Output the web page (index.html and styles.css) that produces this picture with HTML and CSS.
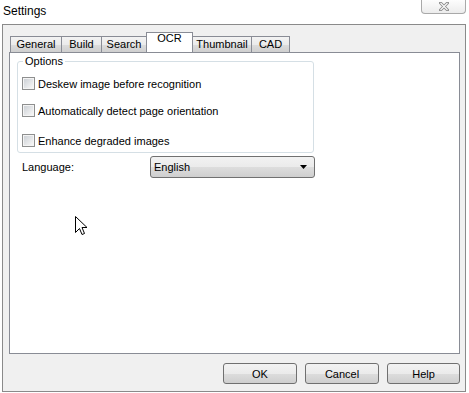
FILE: index.html
```html
<!DOCTYPE html>
<html lang="en">
<head>
  <meta charset="UTF-8">
  <title>Settings</title>
  <link rel="stylesheet" href="styles.css">
</head>
<body>
<div class="window">
  <div class="titlebar">
    <span class="title">Settings</span>
    <button class="close" title="Close">
      <svg width="10" height="9" viewBox="0 0 10 9">
        <path d="M1.5 1 L8.5 8 M8.5 1 L1.5 8" stroke="#8a8a8a" stroke-width="3" stroke-linecap="square" fill="none"/>
        <path d="M1.5 1 L8.5 8 M8.5 1 L1.5 8" stroke="#fafafa" stroke-width="1.2" fill="none"/>
      </svg>
    </button>
  </div>

  <div class="dialog">
    <div class="tabs">
      <div class="tab w-general">General</div>
      <div class="tab w-build">Build</div>
      <div class="tab w-search">Search</div>
      <div class="tab selected w-ocr">OCR</div>
      <div class="tab w-thumb">Thumbnail</div>
      <div class="tab w-cad">CAD</div>
    </div>

    <div class="page">
      <fieldset class="group">
        <legend>Options</legend>
        <label class="check row1"><span class="box"></span>Deskew image before recognition</label>
        <label class="check row2"><span class="box"></span>Automatically detect page orientation</label>
        <label class="check row3"><span class="box"></span>Enhance degraded images</label>
      </fieldset>

      <div class="field">
        <span class="field-label">Language:</span>
        <div class="combo">
          <span>English</span>
          <svg width="7" height="4" viewBox="0 0 7 4"><path d="M0 0 H7 L3.5 4 Z" fill="#000"/></svg>
        </div>
      </div>

      <svg class="cursor" width="13" height="21" viewBox="0 0 13 21">
        <path d="M0.5 0.5 V16.5 L4.5 12.5 L7 18.5 L9.5 17.5 L7 11.5 H12 Z" fill="#fff" stroke="#000" stroke-width="1" stroke-linejoin="miter"/>
      </svg>
    </div>

    <div class="actions">
      <button class="btn">OK</button>
      <button class="btn">Cancel</button>
      <button class="btn btn-last">Help</button>
    </div>
  </div>
</div>
</body>
</html>
```

FILE: styles.css
```css
body {
  margin: 0;
  font-family: 'Liberation Sans', Arial, sans-serif;
  font-size: 11px;
  color: #000;
  background: #fff;
}
.window {
  width: 469px;
  height: 393px;
  background: #fff;
}
.titlebar {
  height: 24px;
  display: flex;
  justify-content: space-between;
  align-items: flex-start;
}
.title {
  font-size: 12px;
  line-height: 14px;
  padding: 4px 0 0 3px;
  color: #000;
}
.close {
  width: 45px;
  height: 14px;
  margin-right: 3px;
  padding: 0 0 1px;
  border: 1px solid #a9a9a9;
  border-top: none;
  border-radius: 0 0 4px 4px;
  background: linear-gradient(#fdfdfd, #ececec);
  display: flex;
  justify-content: center;
  align-items: center;
}
.dialog {
  margin-left: 2px;
  width: 464px;
  height: 368px;
  box-sizing: border-box;
  border: 1px solid #8a8a8a;
  background: #f0f0f0;
  display: flex;
  flex-direction: column;
}
.tabs {
  height: 27px;
  padding-left: 7px;
  display: flex;
  align-items: flex-end;
}
.tab {
  box-sizing: border-box;
  height: 16px;
  margin-left: -1px;
  border: 1px solid #898c95;
  border-bottom: none;
  background: linear-gradient(#f3f3f3 0%, #ebebeb 50%, #dddddd 51%, #cfcfcf 100%);
  text-align: center;
  line-height: 14px;
}
.tab:first-child {
  margin-left: 0;
}
.tab.selected {
  position: relative;
  height: 21px;
  margin-bottom: -1px;
  background: #fff;
  line-height: 11px;
}
.w-general { width: 52px; }
.w-build { width: 41px; }
.w-search { width: 46px; }
.w-ocr { width: 47px; }
.w-thumb { width: 60px; }
.w-cad { width: 39px; }

.page {
  position: relative;
  margin-left: 6px;
  width: 451px;
  height: 302px;
  box-sizing: border-box;
  border: 1px solid #898c95;
  background: #fff;
}
.group {
  box-sizing: border-box;
  width: 297px;
  margin: 2px 0 0 7px;
  padding: 0 0 5px;
  border: 1px solid #d5dfe5;
  border-radius: 3px;
  display: flex;
  flex-direction: column;
}
.group legend {
  margin-left: 5px;
  padding: 0 2px;
  line-height: 13px;
}
.check {
  display: flex;
  align-items: center;
  height: 13px;
  margin-left: 4px;
}
.row1 { margin-top: 9px; }
.row2 { margin-top: 14px; }
.row3 { margin-top: 17px; }
.box {
  box-sizing: border-box;
  width: 13px;
  height: 13px;
  margin-right: 3px;
  border: 1px solid #8e8f8f;
  padding: 1px;
  background: linear-gradient(135deg, #cdd1d6, #f7f7f7) content-box, #f4f4f4;
}
.field {
  display: flex;
  align-items: center;
  margin-top: 3px;
  margin-left: 12px;
}
.field-label {
  width: 128px;
}
.combo {
  box-sizing: border-box;
  width: 165px;
  height: 22px;
  padding: 0 7px 0 3px;
  border: 1px solid #707070;
  border-radius: 3px;
  background: linear-gradient(#f2f2f2 0%, #ebebeb 50%, #dddddd 51%, #cfcfcf 100%);
  display: flex;
  justify-content: space-between;
  align-items: center;
}
.cursor {
  position: absolute;
  left: 65px;
  top: 163px;
}
.actions {
  margin-top: 9px;
  margin-right: 5px;
  display: flex;
  justify-content: flex-end;
  gap: 8px;
}
.btn {
  box-sizing: border-box;
  width: 74px;
  height: 21px;
  padding: 0;
  border: 1px solid #707070;
  border-radius: 3px;
  background: linear-gradient(#f2f2f2 0%, #ebebeb 50%, #dddddd 51%, #cfcfcf 100%);
  font-family: inherit;
  font-size: 11px;
  color: #000;
}
.btn-last {
  width: 73px;
}
```
